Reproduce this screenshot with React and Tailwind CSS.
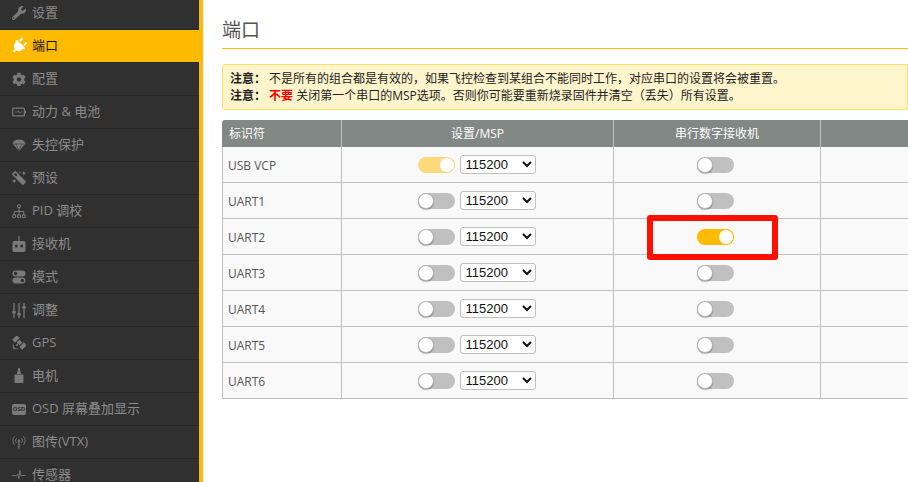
import React from 'react';
import { FaWrench, FaPlug, FaCog, FaMagic } from 'react-icons/fa';

const BatteryIcon = () => (
  <svg width="14" height="14" viewBox="0 0 14 14">
    <rect x="0.6" y="3.1" width="11.8" height="7.800" rx="1" fill="none" stroke="currentColor" strokeWidth="1.2" />
    <rect x="12.6" y="5.500" width="1.4" height="3" fill="currentColor" />
    <path d="M3 7h2.500l1-1.300 1 2.400 .8-1.100H10.500" fill="none" stroke="currentColor" strokeWidth="0.8" />
  </svg>
);

const ParachuteIcon = () => (
  <svg width="14" height="14" viewBox="0 0 14 14">
    <path d="M0.500 5.500C1.200 2.800 4 1.500 7 1.500s5.800 1.300 6.500 4L7 13z" fill="currentColor" />
    <path d="M0.800 6h12.400M4.200 6L7 13l2.800-7" fill="none" stroke="#303030" strokeWidth="0.500" />
  </svg>
);

const SitemapIcon = () => (
  <svg width="14" height="15" viewBox="0 0 14 15">
    <path d="M7 3.500V10M2.200 10.500V7.500h9.600v3" fill="none" stroke="currentColor" strokeWidth="1" />
    <g fill="none" stroke="currentColor" strokeWidth="1.100">
      <circle cx="7" cy="2.200" r="1.500" />
      <circle cx="2.200" cy="12.200" r="1.600" />
      <circle cx="7" cy="12.200" r="1.600" />
      <circle cx="11.800" cy="12.200" r="1.600" />
    </g>
  </svg>
);

const RemoteIcon = () => (
  <svg width="14" height="16" viewBox="0 0 14 16">
    <path d="M6.400 0h1.200v5H12a1.500 1.500 0 0 1 1.500 1.500v8A1.500 1.500 0 0 1 12 16H2a1.500 1.500 0 0 1-1.500-1.500v-8A1.500 1.500 0 0 1 2 5h4.400z" fill="currentColor" />
    <circle cx="4.300" cy="10" r="1.500" fill="#303030" />
    <circle cx="9.700" cy="10" r="1.500" fill="#303030" />
  </svg>
);

const ToggleIcon = () => (
  <svg width="14" height="14" viewBox="0 0 14 14">
    <rect x="0.500" y="0.500" width="13" height="6" rx="3" fill="currentColor" />
    <circle cx="3.600" cy="3.500" r="1.700" fill="#303030" />
    <rect x="0.500" y="7.500" width="13" height="6" rx="3" fill="currentColor" />
    <circle cx="10.400" cy="10.500" r="1.700" fill="#303030" />
  </svg>
);

const SlidersIcon = () => (
  <svg width="14" height="15" viewBox="0 0 14 15">
    <path d="M2 0v15M7 0v15M12 0v15" stroke="currentColor" strokeWidth="1.300" />
    <rect x="0.300" y="8" width="3.400" height="2.400" fill="currentColor" />
    <rect x="5.300" y="10" width="3.400" height="2.400" fill="currentColor" />
    <rect x="10.300" y="3" width="3.400" height="2.400" fill="currentColor" />
  </svg>
);

const SatelliteIcon = () => (
  <svg width="14" height="14" viewBox="0 0 14 14">
    <g fill="currentColor" transform="rotate(-45 7.500 6.500)">
      <rect x="5.500" y="4.500" width="4" height="4" />
      <rect x="4.300" y="-0.500" width="6.400" height="4" />
      <rect x="4.300" y="9.500" width="6.400" height="4" />
      <rect x="3" y="5.700" width="2" height="1.600" />
    </g>
    <path d="M1 8.500A4.500 4.500 0 0 0 5.500 13M1 10.800A2.200 2.200 0 0 0 3.200 13" fill="none" stroke="currentColor" strokeWidth="1" />
  </svg>
);

const MotorIcon = () => (
  <svg width="12" height="16" viewBox="0 0 12 16">
    <path d="M5.200 0h1.600l.4 2.500 1 3.500H3.800l1-3.500z" fill="currentColor" />
    <rect x="1.500" y="6.500" width="9" height="8.500" rx="1" fill="currentColor" />
  </svg>
);

const OsdIcon = () => (
  <span className="flex h-[11px] w-[14px] items-center justify-center rounded-[2px] bg-[#7a7a7a] text-[6px] font-bold leading-none text-[#303030]">
    OSD
  </span>
);

const SignalIcon = () => (
  <svg width="15" height="14" viewBox="0 0 15 14">
    <path d="M7.500 6v8" stroke="currentColor" strokeWidth="1.400" />
    <circle cx="7.500" cy="5.500" r="1.300" fill="currentColor" />
    <path d="M4.900 2.900a3.600 3.600 0 0 0 0 5.200M10.100 2.900a3.600 3.600 0 0 1 0 5.200M2.800 1a6.400 6.400 0 0 0 0 9M12.200 1a6.400 6.400 0 0 1 0 9" fill="none" stroke="currentColor" strokeWidth="1" />
  </svg>
);

const PulseIcon = () => (
  <svg width="15" height="14" viewBox="0 0 15 14">
    <path d="M0 7.500h5l1-1.500 1.200 5 1.200-9 1 5.500h5" fill="none" stroke="currentColor" strokeWidth="1" />
  </svg>
);

const menuItems = [
  { label: '设置', icon: <FaWrench size={14} /> },
  { label: '端口', icon: <FaPlug size={16} className="rotate-45" />, active: true },
  { label: '配置', icon: <FaCog size={15} /> },
  { label: '动力 & 电池', icon: <BatteryIcon /> },
  { label: '失控保护', icon: <ParachuteIcon /> },
  { label: '预设', icon: <FaMagic size={14} className="-scale-x-100" /> },
  { label: 'PID 调校', icon: <SitemapIcon /> },
  { label: '接收机', icon: <RemoteIcon /> },
  { label: '模式', icon: <ToggleIcon /> },
  { label: '调整', icon: <SlidersIcon /> },
  { label: 'GPS', icon: <SatelliteIcon /> },
  { label: '电机', icon: <MotorIcon /> },
  { label: 'OSD 屏幕叠加显示', icon: <OsdIcon /> },
  { label: '图传(VTX)', icon: <SignalIcon /> },
  { label: '传感器', icon: <PulseIcon /> },
];

const ports = [
  { name: 'USB VCP', msp: 'usb', serial: false },
  { name: 'UART1', msp: false, serial: false },
  { name: 'UART2', msp: false, serial: true },
  { name: 'UART3', msp: false, serial: false },
  { name: 'UART4', msp: false, serial: false },
  { name: 'UART5', msp: false, serial: false },
  { name: 'UART6', msp: false, serial: false },
];

function Toggle({ state }) {
  if (state === 'usb') {
    return (
      <span className="flex h-4 w-[37px] items-center justify-end rounded-full bg-[#fdd97c]">
        <span className="h-4 w-4 rounded-full border border-[#fdd97c] bg-white" />
      </span>
    );
  }
  if (state) {
    return (
      <span className="flex h-4 w-[37px] items-center justify-end rounded-full bg-[#ffbb00]">
        <span className="h-4 w-4 rounded-full border border-[#ffbb00] bg-white" />
      </span>
    );
  }
  return (
    <span className="flex h-4 w-[37px] items-center rounded-full bg-[#c0c0c0]">
      <span className="h-4 w-4 rounded-full border border-[#b5b5b5] bg-white shadow-[0_1px_1px_rgba(0,0,0,0.3)]" />
    </span>
  );
}

function BaudSelect() {
  return (
    <select
      defaultValue="115200"
      className="h-[19px] w-[76px] rounded-[3px] border border-[#c0c0c0] bg-white py-0 pl-[1px] text-[13px] leading-[15px] text-[#111] font-['Liberation_Sans',sans-serif]"
    >
      <option>115200</option>
    </select>
  );
}

export default function App() {
  return (
    <div className="flex h-[482px] w-[908px] overflow-hidden bg-white font-['Open_Sans','Noto_Sans_CJK_SC',sans-serif] text-[12px]">
      <nav className="-mt-[3px] h-[485px] w-[203px] shrink-0 overflow-hidden border-r-4 border-[#ffbb00] bg-[#303030]">
        {menuItems.map((item) => (
          <div
            key={item.label}
            className={`flex h-[33px] items-center gap-[6px] border-b pl-[12px] text-[13px] ${
              item.active
                ? 'border-[#2a2a2a] bg-[#ffbb00] text-[#111]'
                : 'border-[#262626] text-[#8c8c8c]'
            }`}
          >
            <span className={`flex w-[14px] justify-center ${item.active ? 'text-white' : 'text-[#7a7a7a]'}`}>
              {item.icon}
            </span>
            {item.label}
          </div>
        ))}
      </nav>

      <main className="min-w-0 flex-1 pl-[19px] pt-[17px]">
        <h1 className="h-[32px] border-b border-[#ffbb00] text-[19px] leading-[27px] text-[#555]">端口</h1>

        <div className="mt-[15px] h-[46px] rounded-l-[3px] border border-[#ffe066] bg-[#fff5cc] px-[7px] pt-[5px] text-[12px] leading-[17px] text-[#222]">
          <p>
            <b className="mr-[3px] font-bold">注意&#xFF1A;</b>
            不是所有的组合都是有效的&#xFF0C;如果飞控检查到某组合不能同时工作&#xFF0C;对应串口的设置将会被重置。
          </p>
          <p>
            <b className="mr-[3px] font-bold">注意&#xFF1A;</b>
            <b className="font-bold text-[#ff0000]">不要</b> 关闭第一个串口的MSP选项。否则你可能要重新烧录固件并清空&#xFF08;丢失&#xFF09;所有设置。
          </p>
        </div>

        <div className="relative mt-[10px] w-[686px]">
          <div className="flex h-[27px] items-center overflow-hidden rounded-tl-[3px] bg-[#828885] text-white">
            <div className="flex h-full w-[119px] items-center pl-[7px]">标识符</div>
            <div className="flex h-full w-[272px] items-center justify-center border-l border-[#c0c0c0]">设置/MSP</div>
            <div className="flex h-full w-[207px] items-center justify-center border-l border-[#c0c0c0]">串行数字接收机</div>
            <div className="h-full flex-1 border-l border-[#c0c0c0]" />
          </div>

          {ports.map((port) => (
            <div key={port.name} className="flex h-[36px] border-b border-l border-[#c0c0c0] bg-[#f9f9f9] text-[#555]">
              <div className="flex w-[118px] items-center pl-[5px] pt-[2px]">{port.name}</div>
              <div className="flex w-[272px] items-center justify-center gap-[5px] border-l border-[#c0c0c0] pr-[2px]">
                <Toggle state={port.msp} />
                <BaudSelect />
              </div>
              <div className="flex w-[207px] items-center justify-center border-l border-[#c0c0c0] pr-[4px]">
                <Toggle state={port.serial} />
              </div>
              <div className="flex-1 border-l border-[#c0c0c0]" />
            </div>
          ))}

          {/* red mark drawn over the screenshot */}
          <div className="absolute left-[425px] top-[95px] h-[45px] w-[131px] rounded-[3px] border-[6px] border-[#ff0f00]" />
        </div>
      </main>
    </div>
  );
}
